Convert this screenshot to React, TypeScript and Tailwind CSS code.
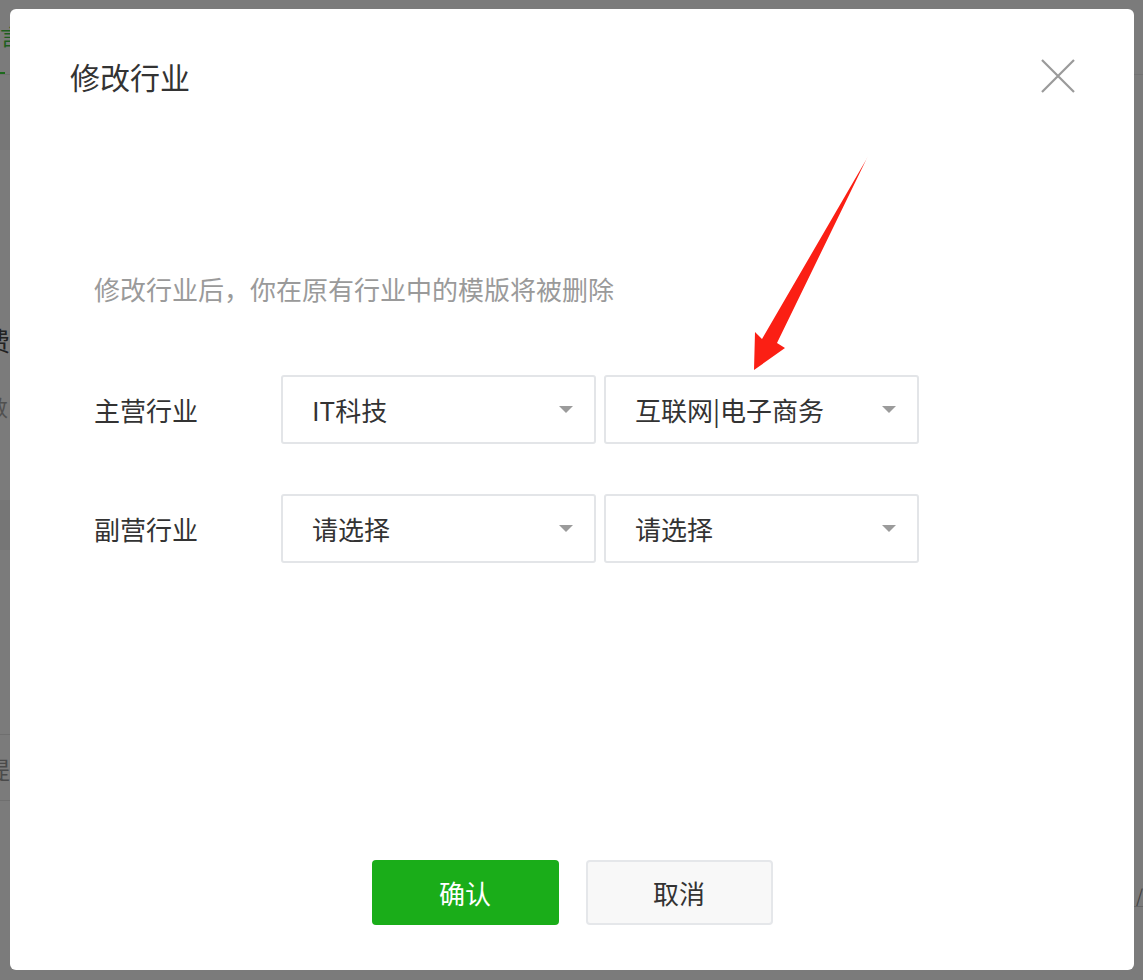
const font = { fontFamily: '"Noto Sans CJK SC", "Noto Sans", sans-serif' };

function Caret() {
  return (
    <svg width="14" height="7" viewBox="0 0 14 7" className="shrink-0">
      <path d="M0 0 L14 0 L7 7 Z" fill="#9b9b9b" />
    </svg>
  );
}

function Select({ value }: { value: string }) {
  return (
    <div className="flex h-[69px] w-[315px] items-center justify-between rounded-[3px] border-2 border-[#e3e5e8] bg-white pl-[29px] pr-[21px]">
      <span className="text-[26px] leading-none text-[#333333]">{value}</span>
      <Caret />
    </div>
  );
}

function Row({ label, a, b }: { label: string; a: string; b: string }) {
  return (
    <div className="flex items-center">
      <div className="w-[187px] text-[26px] leading-none text-[#333333]">{label}</div>
      <div className="flex gap-[8px]">
        <Select value={a} />
        <Select value={b} />
      </div>
    </div>
  );
}

export default function App() {
  return (
    <div className="relative h-[980px] w-[1143px] overflow-hidden bg-[#7b7b7b]" style={font}>
      {/* page behind the overlay */}
      <div className="absolute left-0 top-[24px] w-[5px] text-[22px] leading-none text-[#1f5f1f]">言</div>
      <div className="absolute left-0 top-[72px] h-[3px] w-[5px] bg-[#1d6a1d]" />
      <div className="absolute left-0 top-[74px] h-px w-full bg-[#727272]" />
      <div className="absolute left-0 top-[100px] h-[50px] w-[10px] bg-[#777777]" />
      <div className="absolute left-[-16px] top-[327px] text-[26px] leading-none text-[#222222]">费</div>
      <div className="absolute left-[-14px] top-[395px] text-[22px] leading-none text-[#505050]">数</div>
      <div className="absolute left-0 top-[500px] h-[50px] w-[10px] bg-[#767676]" />
      <div className="absolute left-0 top-[734px] h-px w-[10px] bg-[#6f6f6f]" />
      <div className="absolute left-[-14px] top-[757px] text-[24px] leading-none text-[#4a4a4a]">提</div>
      <div className="absolute left-0 top-[800px] h-px w-[10px] bg-[#6f6f6f]" />
      <div className="absolute right-0 top-[886px] text-[18px] leading-none text-[#444444]">/</div>
      <div className="absolute right-0 top-[906px] h-px w-[10px] bg-[#666666]" />

      <div className="relative pl-[10px] pt-[9px]">
        <div className="flex h-[961px] w-[1124px] flex-col rounded-[6px] bg-white">
          <div className="flex items-center justify-between pl-[60px] pr-[58px] pt-[47px]">
            <h2 className="text-[30px] leading-[40px] text-[#333333]">修改行业</h2>
            <svg width="36" height="36" viewBox="0 0 36 36">
              <path d="M2 2 L34 34 M34 2 L2 34" stroke="#9a9a9a" strokeWidth="2.2" fill="none" />
            </svg>
          </div>

          <p className="pl-[84px] pt-[178px] text-[26px] leading-[30px] text-[#9a9a9a]">
            修改行业后，你在原有行业中的模版将被删除
          </p>

          <div className="flex flex-col gap-[50px] pl-[84px] pt-[71px]">
            <Row label="主营行业" a="IT科技" b="互联网|电子商务" />
            <Row label="副营行业" a="请选择" b="请选择" />
          </div>

          <div className="flex justify-center gap-[27px] pt-[297px]">
            <button className="h-[65px] w-[187px] rounded-[4px] bg-[#1aad19] text-[26px] text-white">确认</button>
            <button className="h-[65px] w-[187px] rounded-[4px] border-2 border-[#e5e7ea] bg-[#f8f8f8] text-[26px] text-[#333333]">
              取消
            </button>
          </div>
        </div>
      </div>

      <svg className="pointer-events-none absolute left-0 top-0" width="1143" height="980">
        <polygon points="868,156 777,343 785,348 754,370 755,332 762,339 866,160" fill="#fb1f14" />
      </svg>
    </div>
  );
}
